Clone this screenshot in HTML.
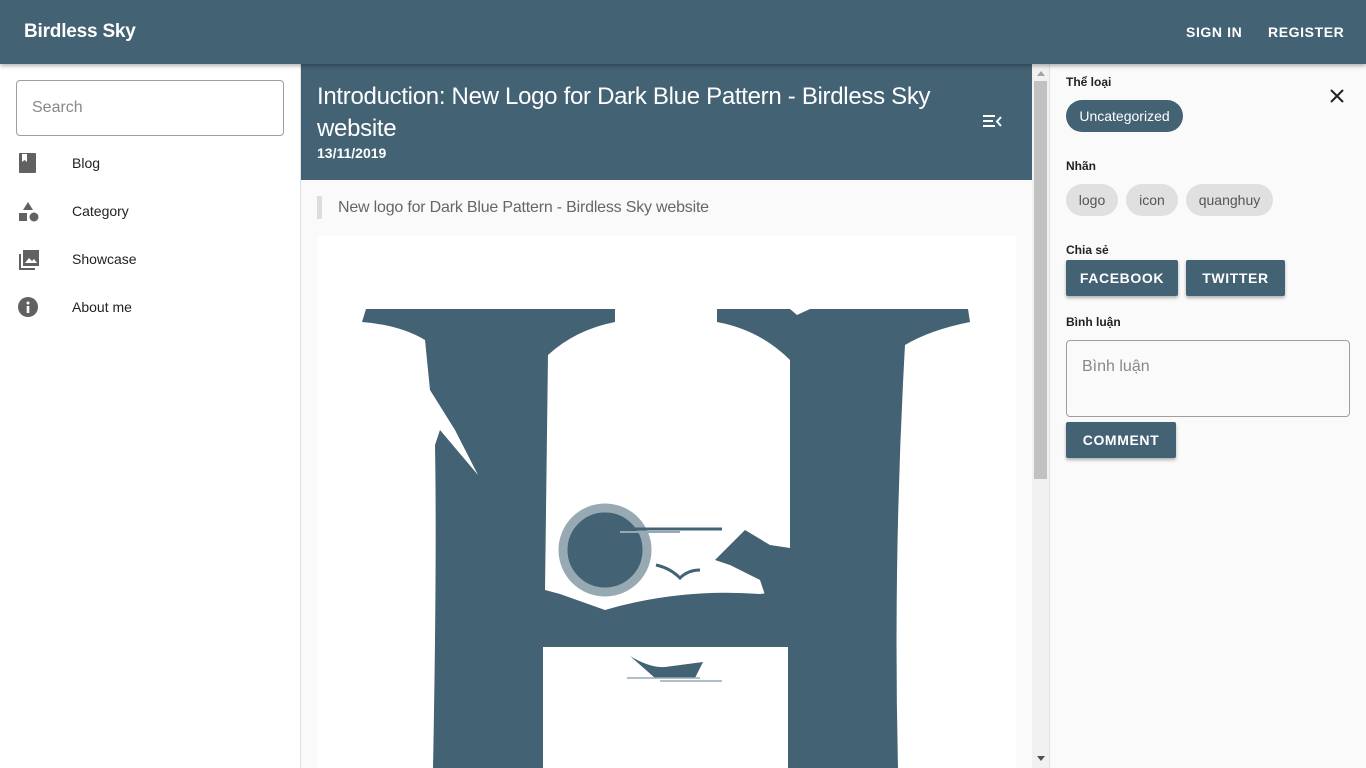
<!DOCTYPE html>
<html><head><meta charset="utf-8"><style>
*{box-sizing:border-box;margin:0;padding:0}
html,body{width:1366px;height:768px;overflow:hidden}
body{background:#fafafa;font-family:"Liberation Sans",Roboto,sans-serif;position:relative}
.top{position:absolute;left:0;top:0;width:1366px;height:64px;background:#436274;box-shadow:0 2px 4px rgba(0,0,0,.3);z-index:5;color:#fff}
.top .t{position:absolute;left:24px;top:21px;font-size:19px;font-weight:bold;letter-spacing:-0.2px}
.top .b{position:absolute;top:24px;font-size:14px;font-weight:bold;letter-spacing:0.6px}
.left{position:absolute;left:0;top:64px;width:301px;height:704px;background:#fff;border-right:1px solid #e0e0e0}
.search{position:absolute;left:16px;top:16px;width:268px;height:56px;border:1px solid #9e9e9e;border-radius:4px;color:#888;font-size:16px;padding:18px 15px}
.nav{position:absolute;left:72px;font-size:14px;color:#222}
.ic{position:absolute;left:18px}
.main{position:absolute;left:301px;top:64px;width:731px;height:704px;background:#fafafa;overflow:hidden}
.hd{position:absolute;left:0;top:0;width:731px;height:116px;background:#436274;color:#fff}
.hd h1{position:absolute;left:16px;top:17px;width:660px;font-size:24px;font-weight:normal;line-height:32px;letter-spacing:-0.3px}
.hd .d{position:absolute;left:16px;top:81px;font-size:14px;font-weight:bold}
.quote{position:absolute;left:16px;top:132px;border-left:5px solid #ddd;padding-left:16px;height:23px;line-height:23px;font-size:16px;color:#666;letter-spacing:-0.2px}
.img{position:absolute;left:16px;top:172px;width:699px;height:540px;background:#fff}
.sb{position:absolute;left:1032px;top:64px;width:17px;height:704px;background:#f1f1f1}
.right{position:absolute;left:1049px;top:64px;width:317px;height:704px;background:#fafafa;border-left:1px solid #e0e0e0}
.lbl{position:absolute;left:16px;font-size:12px;font-weight:bold;color:#222}
.chip{position:absolute;height:32px;border-radius:16px;background:#e0e0e0;color:#555;font-size:14px;line-height:32px;text-align:center}
.btn{position:absolute;height:36px;background:#436274;color:#fff;font-size:14px;font-weight:bold;letter-spacing:0.6px;line-height:36px;text-align:center;border-radius:2px;box-shadow:0 2px 3px rgba(0,0,0,.3)}
</style></head><body>
<div class="top"><div class="t">Birdless Sky</div><div class="b" style="left:1186px">SIGN IN</div><div class="b" style="left:1268px">REGISTER</div></div>
<div class="left">
<div class="search">Search</div>
<svg class="ic" style="top:89px" width="20" height="20"><rect x="1" y="0" width="17" height="20" rx="1" fill="#616161"/><path d="M4 1h5v8l-2.5-2-2.5 2z" fill="#fff"/></svg><div class="nav" style="top:91px">Blog</div>
<svg class="ic" style="top:137px" width="22" height="22"><path d="M10 1l5 8H5z" fill="#616161"/><rect x="1" y="12" width="8" height="8" fill="#616161"/><circle cx="16" cy="16" r="4.5" fill="#616161"/></svg><div class="nav" style="top:139px">Category</div>
<svg class="ic" style="top:185px" width="22" height="22"><path d="M1 5v16h16v-2H3V5z" fill="#616161"/><rect x="5" y="1" width="16" height="16" fill="#616161"/><path d="M7 14l4-5 3 3 2-2 3 4z" fill="#fff"/></svg><div class="nav" style="top:187px">Showcase</div>
<svg class="ic" style="top:233px" width="22" height="22"><circle cx="10" cy="10" r="10" fill="#616161"/><rect x="8.7" y="9" width="2.6" height="7" fill="#fff"/><circle cx="10" cy="6" r="1.5" fill="#fff"/></svg><div class="nav" style="top:235px">About me</div>
</div>
<div class="main">
<div class="hd"><h1>Introduction: New Logo for Dark Blue Pattern - Birdless Sky website</h1><div class="d">13/11/2019</div>
<svg style="position:absolute;left:681px;top:51px" width="20" height="14"><path d="M1 1h12M1 6h10M1 11h12" stroke="#fff" stroke-width="2"/><path d="M19 2l-4 4.5 4 4.5" stroke="#fff" stroke-width="2" fill="none"/></svg></div>
<div class="quote">New logo for Dark Blue Pattern - Birdless Sky website</div>
<div class="img">
<svg width="699" height="540" viewBox="317 236 699 540" style="position:absolute;left:0;top:0">
<g fill="#436274">
<path d="M366 309H615V322Q575 330 548 355L545 590L560 594L605 610Q680 588 760 594L790 590L790 360Q760 330 717 322V309H790L797 315L810 309H968L970 322Q930 330 905 345Q893 560 898 768H788V647H543V768H433Q437 560 435 445L440 430L478 475L455 430L430 390L425 340Q400 325 362 322Z"/>
<path d="M715 560L745 530L770 545L790 548V595L770 610L760 580L730 565Z"/>
</g>
<circle cx="605" cy="550" r="42" fill="#436274" stroke="#97aab3" stroke-width="9"/>
<path d="M620 529H722" stroke="#436274" stroke-width="3"/><path d="M620 532H680" stroke="#97aab3" stroke-width="2"/>
<path d="M656 565Q670 568 680 578Q688 570 700 570" stroke="#436274" stroke-width="3" fill="none"/>
<path d="M630 656Q650 668 665 667L703 662L695 678H655Z" fill="#436274"/>
<path d="M627 678H700M660 681H722" stroke="#97aab3" stroke-width="1.5"/>
</svg>
</div>
</div>
<div class="sb"><svg style="position:absolute;left:5px;top:7px" width="8" height="5"><path d="M0 5L4 0L8 5Z" fill="#a3a3a3"/></svg><div style="position:absolute;left:2px;top:17px;width:13px;height:398px;background:#c1c1c1"></div><svg style="position:absolute;left:5px;top:692px" width="8" height="5"><path d="M0 0L4 5L8 0Z" fill="#505050"/></svg></div>
<div class="right">
<div class="lbl" style="top:11px">Thể loại</div>
<svg style="position:absolute;left:280px;top:25px" width="14" height="14"><path d="M1 1L13 13M13 1L1 13" stroke="#222" stroke-width="2"/></svg>
<div class="chip" style="left:16px;top:36px;width:117px;background:#436274;color:#fff">Uncategorized</div>
<div class="lbl" style="top:95px">Nhãn</div>
<div class="chip" style="left:16px;top:120px;width:52px">logo</div>
<div class="chip" style="left:76px;top:120px;width:52px">icon</div>
<div class="chip" style="left:136px;top:120px;width:87px">quanghuy</div>
<div class="lbl" style="top:179px">Chia sẻ</div>
<div class="btn" style="left:16px;top:196px;width:112px">FACEBOOK</div>
<div class="btn" style="left:136px;top:196px;width:99px">TWITTER</div>
<div class="lbl" style="top:251px">Bình luận</div>
<div style="position:absolute;left:16px;top:276px;width:284px;height:77px;border:1px solid #9e9e9e;border-radius:4px;font-size:16px;color:#888;padding:17px 15px">Bình luận</div>
<div class="btn" style="left:16px;top:358px;width:110px">COMMENT</div>
</div>
</body></html>
